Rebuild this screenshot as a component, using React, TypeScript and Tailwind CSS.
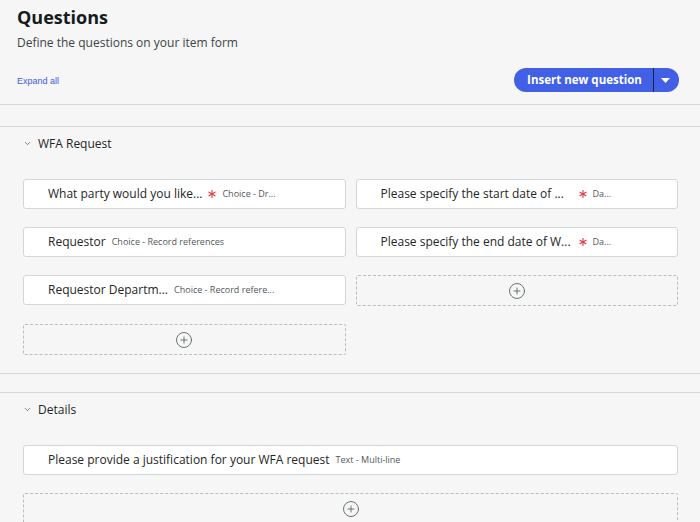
import { ChevronDown, CirclePlus } from "lucide-react";

type Question = {
  title: string;
  type: string;
  required?: boolean;
  titleWidth?: string;
};

const wfaQuestions: (Question | null)[] = [
  { title: "What party would you like...", type: "Choice - Dr...", required: true },
  { title: "Please specify the start date of ...", type: "Da...", required: true, titleWidth: "w-[192px]" },
  { title: "Requestor", type: "Choice - Record references" },
  { title: "Please specify the end date of W...", type: "Da...", required: true, titleWidth: "w-[192px]" },
  { title: "Requestor Departm...", type: "Choice - Record refere..." },
  null,
];

const RequiredMark = () => (
  <svg width="8" height="8" viewBox="0 0 8 8" className="ml-[6px] shrink-0">
    <g stroke="#e0393e" strokeWidth="1.1" strokeLinecap="round">
      <path d="M4 0.5v7" />
      <path d="M1 2.2l6 3.6" />
      <path d="M1 5.8l6-3.6" />
    </g>
  </svg>
);

const QuestionCard = ({ q, full }: { q: Question; full?: boolean }) => (
  <div
    className={`h-[30px] bg-white border border-[#d3d6d6] rounded-[3px] flex items-center pl-[24px] ${
      full ? "col-span-2" : ""
    }`}
  >
    <span className={`text-[12px] text-[#1e2626] whitespace-nowrap ${q.titleWidth ?? ""}`}>
      {q.title}
    </span>
    {q.required && <RequiredMark />}
    <span className="text-[9px] text-[#4f5959] ml-[6px] whitespace-nowrap">{q.type}</span>
  </div>
);

const AddSlot = ({ full }: { full?: boolean }) => (
  <div
    className={`h-[31px] border border-dashed border-[#b9bdbd] rounded-[2px] flex items-center justify-center ${
      full ? "col-span-2" : ""
    }`}
  >
    <CirclePlus className="w-[18px] h-[18px] text-[#5c6666]" strokeWidth={1.2} />
  </div>
);

const SectionHeader = ({ label }: { label: string }) => (
  <div className="h-[33px] flex items-center pl-[23px]">
    <ChevronDown className="w-[9px] h-[9px] text-[#4f5959]" strokeWidth={2} />
    <span className="ml-[6px] text-[12px] text-[#1e2626]">{label}</span>
  </div>
);

export default function App() {
  return (
    <div
      className="w-[700px] h-[522px] overflow-hidden bg-[#f5f6f5]"
      style={{ fontFamily: '"Open Sans", "Noto Sans", sans-serif' }}
    >
      {/* Page header */}
      <div className="px-[17px] pr-[21px] pt-[5px] pb-[12px] border-b border-[#d6d8d7]">
        <h1 className="text-[18px] leading-[24px] font-bold text-[#161c1c]">Questions</h1>
        <p className="mt-[6px] text-[12px] leading-[16px] text-[#3c4545]">
          Define the questions on your item form
        </p>
        <div className="mt-[17px] flex items-center justify-between">
          <a
            href="#"
            className="text-[9px] text-[#3d5ce0] mt-[3px]"
            style={{ fontFamily: '"Liberation Sans", Arial, sans-serif' }}
          >
            Expand all
          </a>
          <div className="flex h-[24px] rounded-full bg-[#4160e6] text-white overflow-hidden">
            <button className="w-[140px] h-full text-[11.5px] font-bold pl-[2px] border-r border-[#1c2340]">
              Insert new question
            </button>
            <button className="w-[25px] h-full flex items-center justify-center pr-[2px]">
              <svg width="9" height="5" viewBox="0 0 9 5">
                <path d="M0 0h9L4.5 5z" fill="white" />
              </svg>
            </button>
          </div>
        </div>
      </div>

      <div className="h-[21px]" />

      {/* WFA Request section */}
      <section className="border-t border-b border-[#d6d8d7] pb-[18px]">
        <SectionHeader label="WFA Request" />
        <div className="mt-[19px] grid grid-cols-2 gap-x-[10px] gap-y-[18px] pl-[23px] pr-[22px]">
          {wfaQuestions.map((q, i) => (q ? <QuestionCard key={i} q={q} /> : <AddSlot key={i} />))}
          <AddSlot />
        </div>
      </section>

      <div className="h-[18px]" />

      {/* Details section */}
      <section className="border-t border-[#d6d8d7]">
        <SectionHeader label="Details" />
        <div className="mt-[19px] grid grid-cols-2 gap-y-[18px] pl-[23px] pr-[22px]">
          <QuestionCard
            full
            q={{ title: "Please provide a justification for your WFA request", type: "Text - Multi-line" }}
          />
          <AddSlot full />
        </div>
      </section>
    </div>
  );
}
